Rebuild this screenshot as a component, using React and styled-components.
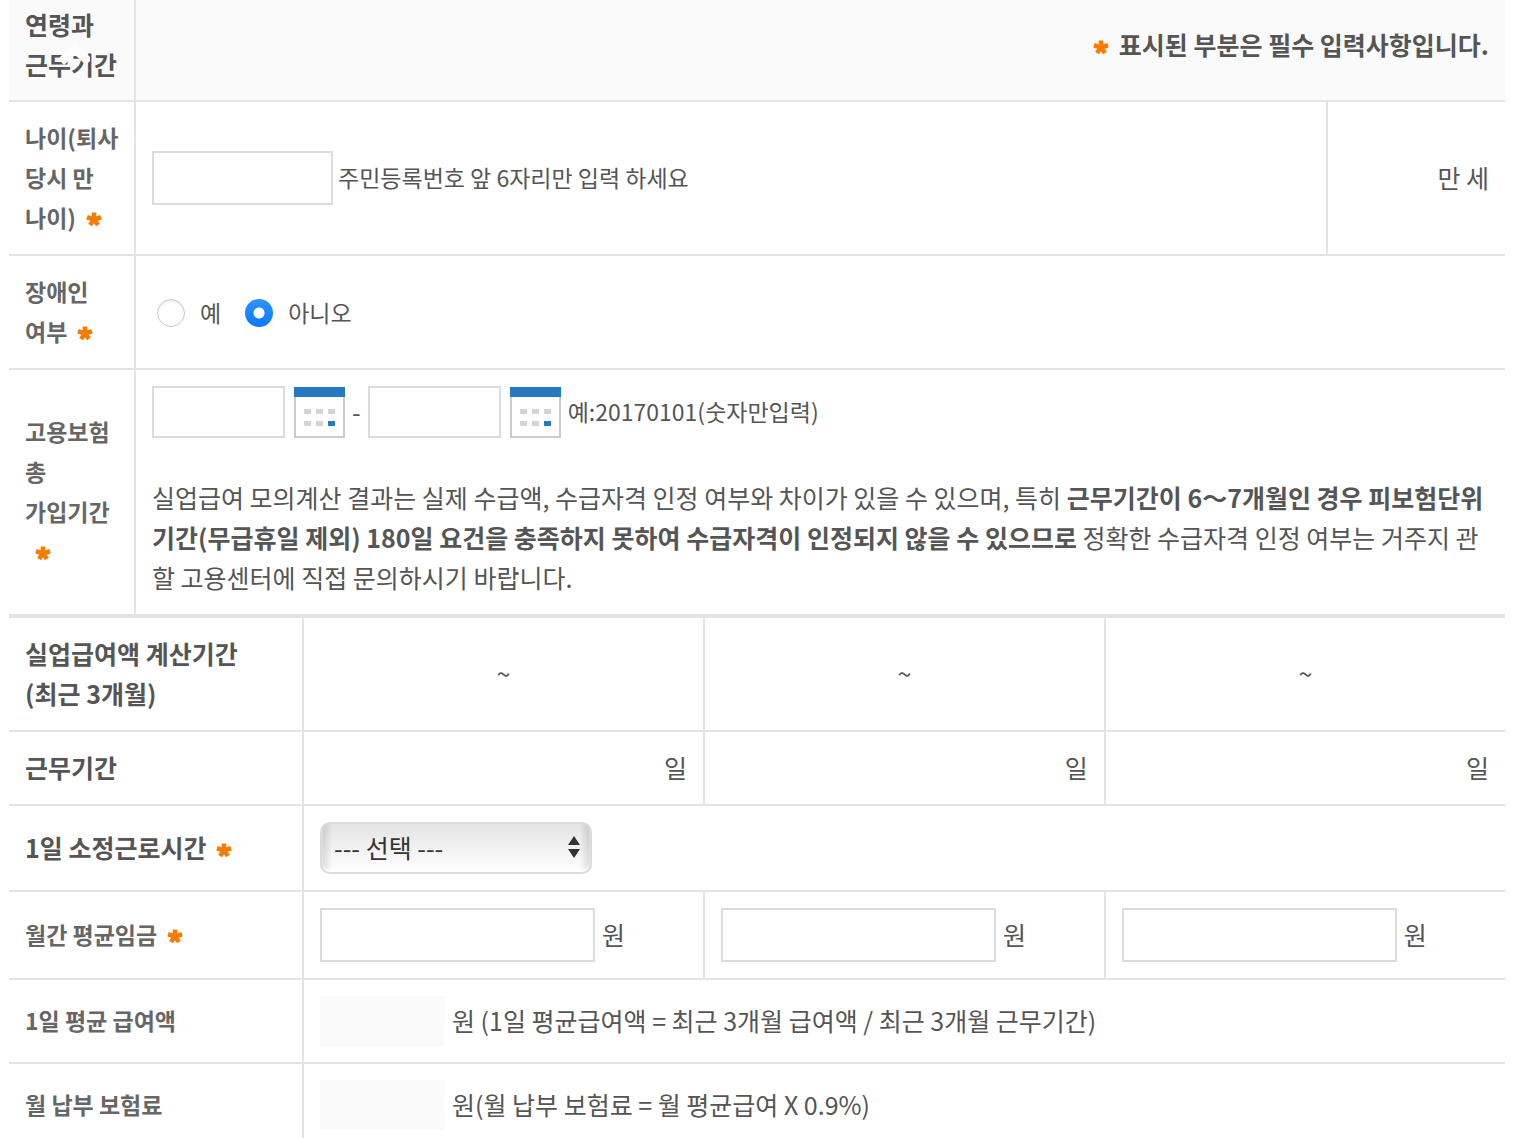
import React from "react";
import styled, { createGlobalStyle, css } from "styled-components";

const GlobalStyle = createGlobalStyle`
  *, *::before, *::after { box-sizing: border-box; }
  body {
    margin: 0;
    background: #fff;
    color: #555;
    font-family: "Noto Sans CJK KR", "Noto Sans", sans-serif;
    font-size: 25px;
    line-height: 40px;
  }
`;

const Page = styled.main`
  padding: 0 9px;
`;

const ArrowUp = styled.svg`
  position: absolute;
  left: 60px;
  top: 42px;
  width: 30px;
  height: 24px;
`;

const Table = styled.table`
  width: 100%;
  table-layout: fixed;
  border-collapse: separate;
  border-spacing: 0;
  border-top: ${(p) => (p.$topLine ? "2px solid #e4e4e4" : "0")};
`;

const Col = styled.col`
  width: ${(p) => p.$width};
`;

const cell = css`
  padding: 16px;
  border-bottom: 2px solid #e4e4e4;
  vertical-align: middle;
  &:not(:last-child) {
    border-right: 2px solid #e4e4e4;
  }
`;

const textCell = css`
  padding-top: 15px;
  padding-bottom: 17px;
`;

const Th = styled.th`
  ${cell}
  ${textCell}
  text-align: ${(p) => p.$align || "left"};
  white-space: nowrap;
  font-weight: 700;
  font-size: ${(p) => (p.$small ? 23 : 25)}px;
  color: ${(p) => (p.$small ? "#666" : "#555")};
`;

const HeadRow = styled.tr`
  background: #fafafa;
  ${Th} {
    padding-top: 4px;
    padding-bottom: 16px;
  }
`;

const Td = styled.td`
  ${cell}
`;

const TextTd = styled.td`
  ${cell}
  ${textCell}
  text-align: ${(p) => p.$align};
`;

const Line = styled.div`
  display: flex;
  align-items: center;
  gap: ${(p) => p.$gap || 7}px;
`;

const Note = styled.span`
  padding-bottom: 3px;
  font-size: ${(p) => (p.$small ? 23 : 25)}px;
`;

const TextBox = styled.input`
  display: block;
  width: ${(p) => p.$width}px;
  height: ${(p) => p.$height || 54}px;
  padding: 0 8px;
  border: 2px solid #dcdcdc;
  border-radius: 0;
  background: #fff;
  color: #333;
  font: inherit;
`;

const ResultBox = styled.input`
  display: block;
  width: 125px;
  height: 50px;
  padding: 0 8px;
  border: 0;
  background: #fafafa;
  color: #333;
  font: inherit;
  text-align: right;
`;

const RadioGroup = styled.div`
  display: flex;
  gap: 24px;
  padding-left: 5px;
`;

const RadioLabel = styled.label`
  display: flex;
  align-items: center;
  gap: 15px;
  font-size: 23px;
`;

const Radio = styled.input`
  appearance: none;
  width: 28px;
  height: 28px;
  margin: 2px 0 0;
  border-radius: 50%;
  border: 1px solid #c8c8c8;
  background: #fff;
  box-shadow: inset 0 2px 2px #eee;
  &:checked {
    border: 0;
    background: radial-gradient(circle, #fff 5px, transparent 6px),
      linear-gradient(#2f93ff, #0a7aff);
    box-shadow: none;
  }
`;

const CalendarButton = styled.button`
  display: block;
  width: 51px;
  height: 51px;
  padding: 0;
  border: 0;
  background: none;
  cursor: pointer;
  svg { display: block; }
`;

const Notice = styled.p`
  margin: 39px 0 1px;
`;

const SelectWrap = styled.div`
  position: relative;
  width: 272px;
  svg {
    position: absolute;
    right: 12px;
    top: 14px;
    pointer-events: none;
  }
`;

const Select = styled.select`
  appearance: none;
  display: block;
  width: 100%;
  height: 52px;
  padding: 0 12px 3px;
  border: 2px solid #dadada;
  border-radius: 10px;
  background: linear-gradient(90deg, #0002, transparent 10px calc(100% - 10px), #0002),
    linear-gradient(#e4e4e4, #fff);
  box-shadow: inset 0 -2px 2px #fff;
  color: #333;
  font: inherit;
`;

const Star = styled.svg`
  width: 16px;
  height: 16px;
  margin: 0 ${(p) => p.$after || 0}px 0 ${(p) => p.$before ?? 10}px;
  vertical-align: 0;
`;

function Required({ before, after }) {
  return (
    <Star viewBox="0 0 16 16" $before={before} $after={after} role="img" aria-label="필수">
      <g stroke="#f57c00" strokeWidth="4.6">
        <path d="M8 8.5V1.500" />
        <path d="M8 8.500L1 6.300" />
        <path d="M8 8.500l7-2.200" />
        <path d="M8 8.500L4 14" />
        <path d="M8 8.500l4 5.500" />
      </g>
    </Star>
  );
}

function Calendar({ label }) {
  return (
    <CalendarButton type="button" aria-label={label}>
      <svg width="51" height="51" viewBox="0 0 51 51" aria-hidden="true">
        <rect x="1" y="1" width="49" height="49" fill="#fff" stroke="#ccc" strokeWidth="2" />
        <rect width="51" height="10" fill="#2679c2" />
        <g fill="#d4d4d4">
          <rect x="10" y="22" width="7" height="5" />
          <rect x="22" y="22" width="7" height="5" />
          <rect x="34" y="22" width="7" height="5" />
          <rect x="10" y="34" width="7" height="5" />
          <rect x="22" y="34" width="7" height="5" />
        </g>
        <rect x="34" y="34" width="7" height="5" fill="#2679c2" />
      </svg>
    </CalendarButton>
  );
}

function DateField({ label }) {
  return (
    <Line $gap={9}>
      <TextBox aria-label={label} $width={133} $height={52} />
      <Calendar label={`${label} 선택`} />
    </Line>
  );
}

const months = ["첫째 달", "둘째 달", "셋째 달"];

export default function App() {
  return (
    <Page>
      <GlobalStyle />
      <Table>
        <colgroup>
          <Col $width="127px" />
          <Col />
          <Col $width="177px" />
        </colgroup>
        <thead>
          <HeadRow>
            <Th scope="col">연령과<br />근무기간</Th>
            <Th colSpan={2} $align="right">
              <Required before={0} after={10} />표시된 부분은 필수 입력사항입니다.
            </Th>
          </HeadRow>
        </thead>
        <tbody>
          <tr>
            <Th scope="row" $small>
              <label htmlFor="birth">나이(퇴사<br />당시 만<br />나이)</label><Required />
            </Th>
            <Td>
              <Line $gap={5}>
                <TextBox id="birth" $width={181} />
                <Note $small>주민등록번호 앞 6자리만 입력 하세요</Note>
              </Line>
            </Td>
            <TextTd $align="right">만 세</TextTd>
          </tr>
          <tr>
            <Th scope="row" $small>장애인<br />여부<Required /></Th>
            <Td colSpan={2}>
              <RadioGroup role="radiogroup" aria-label="장애인 여부">
                <RadioLabel><Radio type="radio" name="disabled" />예</RadioLabel>
                <RadioLabel><Radio type="radio" name="disabled" defaultChecked />아니오</RadioLabel>
              </RadioGroup>
            </Td>
          </tr>
          <tr>
            <Th scope="row" $small>고용보험<br />총<br />가입기간<br /><Required /></Th>
            <Td colSpan={2}>
              <Line>
                <DateField label="가입 시작일" />
                <Note>-</Note>
                <DateField label="가입 종료일" />
                <Note $small>예:20170101(숫자만입력)</Note>
              </Line>
              <Notice>
                실업급여 모의계산 결과는 실제 수급액, 수급자격 인정 여부와 차이가 있을 수 있으며, 특히{" "}
                <strong>
                  근무기간이 6～7개월인 경우 피보험단위기간(무급휴일 제외) 180일 요건을 충족하지 못하여
                  수급자격이 인정되지 않을 수 있으므로
                </strong>{" "}
                정확한 수급자격 인정 여부는 거주지 관할 고용센터에 직접 문의하시기 바랍니다.
              </Notice>
            </Td>
          </tr>
        </tbody>
      </Table>

      <Table $topLine>
        <colgroup>
          <Col $width="295px" />
          <Col $width="26.8%" />
          <Col $width="26.8%" />
          <Col />
        </colgroup>
        <tbody>
          <tr>
            <Th scope="row">실업급여액 계산기간<br />(최근 3개월)</Th>
            {months.map((m) => <TextTd key={m} $align="center">~</TextTd>)}
          </tr>
          <tr>
            <Th scope="row">근무기간</Th>
            {months.map((m) => <TextTd key={m} $align="right">일</TextTd>)}
          </tr>
          <tr>
            <Th scope="row"><label htmlFor="hours">1일 소정근로시간</label><Required /></Th>
            <Td colSpan={3}>
              <SelectWrap>
                <Select id="hours">
                  <option>--- 선택 ---</option>
                </Select>
                <svg width="12" height="22" viewBox="0 0 12 22" fill="#333" aria-hidden="true">
                  <path d="M6 0l6 9H0zM0 13h12l-6 9z" />
                </svg>
              </SelectWrap>
            </Td>
          </tr>
          <tr>
            <Th scope="row" $small>월간 평균임금<Required /></Th>
            {months.map((m) => (
              <Td key={m}>
                <Line>
                  <TextBox $width={275} aria-label={`${m} 월간 평균임금`} />
                  <Note>원</Note>
                </Line>
              </Td>
            ))}
          </tr>
          <tr>
            <Th scope="row" $small><label htmlFor="daily">1일 평균 급여액</label></Th>
            <Td colSpan={3}>
              <Line>
                <ResultBox id="daily" readOnly />
                <Note>원 (1일 평균급여액 = 최근 3개월 급여액 / 최근 3개월 근무기간)</Note>
              </Line>
            </Td>
          </tr>
          <tr>
            <Th scope="row" $small><label htmlFor="premium">월 납부 보험료</label></Th>
            <Td colSpan={3}>
              <Line>
                <ResultBox id="premium" readOnly />
                <Note>원(월 납부 보험료 = 월 평균급여 X 0.9%)</Note>
              </Line>
            </Td>
          </tr>
        </tbody>
      </Table>
      <ArrowUp viewBox="0 0 30 24" aria-hidden="true">
        <path d="M15 0L30 15v4l-4 4-11-10-11 10-4-4v-4z" fill="#fdfdfd" />
      </ArrowUp>
    </Page>
  );
}
